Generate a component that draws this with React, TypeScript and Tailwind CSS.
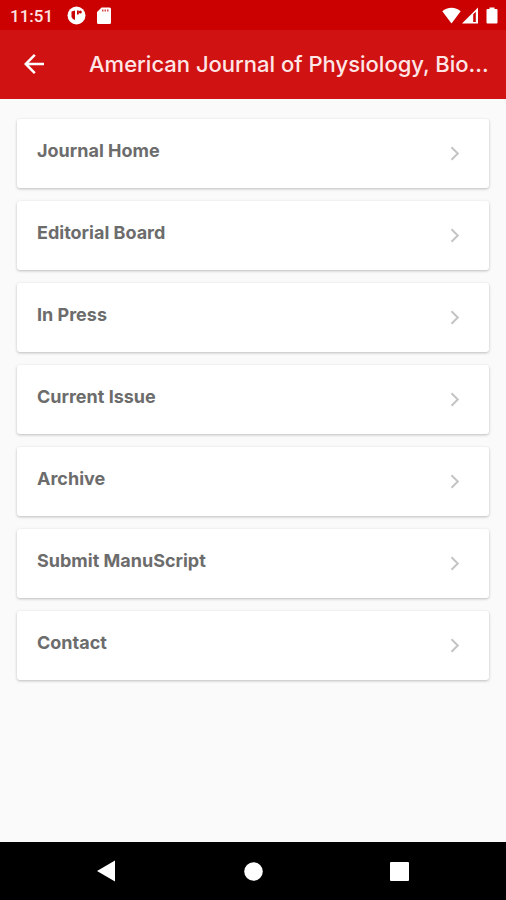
const items = [
  'Journal Home',
  'Editorial Board',
  'In Press',
  'Current Issue',
  'Archive',
  'Submit ManuScript',
  'Contact',
]

function StatusBar() {
  return (
    <div className="flex h-[30px] items-center justify-between bg-[#cb0000] pt-px pl-[10px] pr-2 text-white">
      <div className="flex items-center">
        <span className="font-['Roboto',sans-serif] text-[17px] leading-5 font-medium text-[#ffe3e3]">11:51</span>
        <svg className="ml-[14px]" width="19" height="19" viewBox="0 0 19 19" aria-hidden="true">
          <circle cx="9.5" cy="9.5" r="9" fill="#fff" />
          <path d="M4.500 5.500 8 4.500v9.500a5 5 0 0 1-3.500-3z" fill="#cb0000" />
          <path d="M10 4.500h1.800v4H10z" fill="#cb0000" />
          <circle cx="13.300" cy="5.900" r="1.500" fill="#cb0000" />
        </svg>
        <svg className="ml-[11px]" width="14" height="17" viewBox="0 0 14 17" aria-hidden="true">
          <path d="M4.500.5h8A1.500 1.500 0 0 1 14 2v13.500a1.500 1.500 0 0 1-1.500 1.500h-11A1.500 1.500 0 0 1 0 15.500V5z" fill="#fff" />
          <path d="M5 2.500h1.500v2H5zM7.500 2.500H9v2H7.500zM10 2.500h1.500v2H10z" fill="#d84a4a" />
        </svg>
      </div>
      <div className="flex items-center">
        <svg width="19" height="17" viewBox="0 0 19 17" aria-hidden="true">
          <path d="M9.500 16.500.3 4.200C2.800 1.900 6 .7 9.500.7s6.700 1.200 9.200 3.500z" fill="#fff" />
        </svg>
        <svg className="ml-px" width="16" height="17" viewBox="0 0 16 17" aria-hidden="true">
          <path fillRule="evenodd" d="M0 16.500 16 .5v16zM11.200 7.200v7.800h2.600V4.800z" fill="#fff" />
        </svg>
        <svg className="ml-2" width="12" height="17" viewBox="0 0 12 17" aria-hidden="true">
          <path d="M3.500.5h5V2H10.500a1 1 0 0 1 1 1v12.500a1 1 0 0 1-1 1h-9a1 1 0 0 1-1-1V3a1 1 0 0 1 1-1h2z" fill="#fff" />
        </svg>
      </div>
    </div>
  )
}

function NavBar() {
  return (
    <nav className="grid h-[58px] grid-cols-[1fr_100px_1fr] items-center bg-black">
      <button type="button" aria-label="Back" className="mr-[88px] justify-self-end">
        <svg width="20" height="22" viewBox="0 0 20 22" className="block">
          <path d="M2 11 20 .5v21z" fill="#fff" />
        </svg>
      </button>
      <button type="button" aria-label="Home" className="justify-self-center">
        <svg width="19" height="19" viewBox="0 0 19 19" className="block">
          <circle cx="9.500" cy="9.500" r="9.300" fill="#fff" />
        </svg>
      </button>
      <button type="button" aria-label="Recent apps" className="ml-[87px] justify-self-start">
        <svg width="19" height="19" viewBox="0 0 19 19" className="block">
          <rect width="19" height="19" rx="1" fill="#fff" />
        </svg>
      </button>
    </nav>
  )
}

export default function App() {
  return (
    <div className="flex min-h-screen flex-col bg-[#fafafa] font-['Inter',sans-serif]">
      <StatusBar />

      <header className="flex h-[69px] items-center bg-[#d01213] pr-3 pb-px pl-6 text-[#ffe6e6]">
        <button type="button" aria-label="Go back" className="mr-[45px] shrink-0">
          <svg width="20" height="20" viewBox="0 0 20 20" fill="none" stroke="#fff" strokeWidth="2.500" className="block">
            <path d="M20 10H2M10.800.9 1.700 10l9.100 9.100" />
          </svg>
        </button>
        <h1 className="min-w-0 flex-1 truncate text-[22px] leading-8 font-medium">American Journal of Physiology, Bio...</h1>
      </header>

      <main className="flex-1 px-[17px] pt-5 pb-5">
        <ul className="flex flex-col gap-[13px]">
          {items.map((item) => (
            <li key={item}>
              <a
                href="#"
                className="flex h-[69px] items-center justify-between rounded-[3px] bg-white pr-[29px] pl-5 shadow-[0_1px_3px_rgba(0,0,0,0.25)]"
              >
                <span className="pb-1.5 text-lg leading-6 font-bold text-[#6c6c6c]">{item}</span>
                <svg width="10" height="15" viewBox="0 0 10 15" fill="none" stroke="#c4c4c4" strokeWidth="2" aria-hidden="true">
                  <path d="m1.500 1.200 6.300 6.300-6.300 6.300" />
                </svg>
              </a>
            </li>
          ))}
        </ul>
      </main>

      <NavBar />
    </div>
  )
}
